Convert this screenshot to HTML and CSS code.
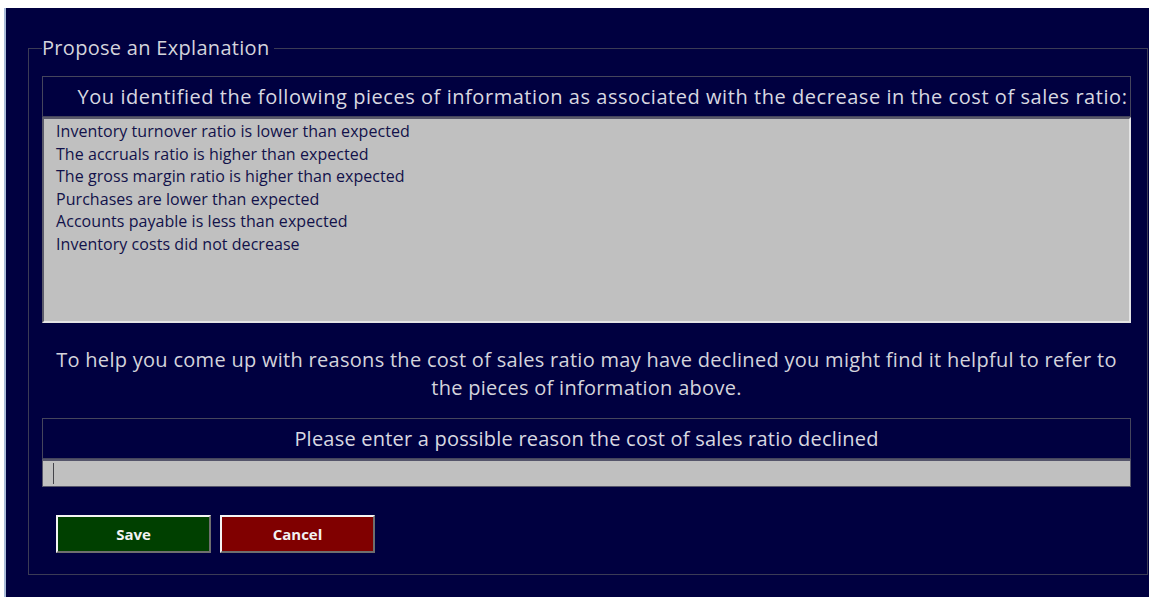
FILE: index.html
```html
<!DOCTYPE html>
<html lang="en">
<head>
<meta charset="utf-8">
<title>Propose an Explanation</title>
<link rel="stylesheet" href="styles.css">
</head>
<body>
<div class="window">
  <fieldset class="panel">
    <legend class="panel-title">Propose an Explanation</legend>
    <div class="section-head section-head-wide">You identified the following pieces of information as associated with the decrease in the cost of sales ratio:</div>
    <ul class="evidence-list">
      <li>Inventory turnover ratio is lower than expected</li>
      <li>The accruals ratio is higher than expected</li>
      <li>The gross margin ratio is higher than expected</li>
      <li>Purchases are lower than expected</li>
      <li>Accounts payable is less than expected</li>
      <li>Inventory costs did not decrease</li>
    </ul>
    <p class="hint">To help you come up with reasons the cost of sales ratio may have declined you might find it helpful to refer to the pieces of information above.</p>
    <div class="section-head">Please enter a possible reason the cost of sales ratio declined</div>
    <div class="reason-input"><span class="caret"></span></div>
    <div class="actions">
      <button class="btn btn-save" type="button">Save</button>
      <button class="btn btn-cancel" type="button">Cancel</button>
    </div>
  </fieldset>
</div>
</body>
</html>
```

FILE: styles.css
```css
html, body {
  margin: 0;
  padding: 0;
  background: #ffffff;
  height: 100%;
}

body {
  font-family: "Open Sans", Lato, sans-serif;
}

.window {
  box-sizing: border-box;
  height: calc(100% - 8px);
  margin: 8px 0 0 4px;
  border-left: 2px solid #a9bcd8;
  background: #000040;
  padding: 28px 1px 0 22px;
}

.panel {
  margin: 0;
  padding: 16px 16px 21px 13px;
  border: 1px solid #3b3b55;
  min-width: 0;
}

.panel-title {
  margin-left: 0;
  padding: 0 5px 0 0;
  color: #d4d4dc;
  font-size: 20px;
  line-height: 24px;
  letter-spacing: 0.3px;
}

.section-head {
  border: 1px solid #45455c;
  color: #d8d8e0;
  font-size: 20px;
  line-height: 39px;
  text-align: center;
  white-space: nowrap;
  letter-spacing: 0.21px;
}

.section-head-wide {
  padding-left: 32px;
  letter-spacing: 0.55px;
}

.evidence-list {
  list-style: none;
  margin: 0;
  padding: 1px 12px 0;
  box-sizing: border-box;
  height: 206px;
  background: #c0c0c0;
  border-style: solid;
  border-width: 2px;
  border-color: #5a5a6a #e4e4e4 #e4e4e4 #5a5a6a;
  color: #12124a;
  font-size: 16px;
  line-height: 22.5px;
  letter-spacing: 0.05px;
}

.hint {
  margin: 23px 0 16px;
  color: #d4d4dc;
  font-size: 20px;
  line-height: 28px;
  text-align: center;
  letter-spacing: 0.29px;
}

.reason-input {
  box-sizing: border-box;
  height: 28px;
  background: #c0c0c0;
  border: 1px solid #55556a;
  border-top-width: 2px;
  padding: 2px 0 0 10px;
}

.caret {
  display: block;
  width: 1px;
  height: 21px;
  background: #44444a;
}

.actions {
  display: flex;
  gap: 9px;
  margin: 28px 0 0 14px;
}

.btn {
  width: 155px;
  height: 38px;
  padding: 0;
  font-family: "Open Sans", Lato, sans-serif;
  font-weight: bold;
  font-size: 15px;
  color: #f2f2f2;
  border-style: solid;
  border-width: 2px;
  border-color: #f4f4f4 #6e6e6e #6e6e6e #f4f4f4;
}

.btn-save {
  background: #004000;
}

.btn-cancel {
  background: #800000;
}
```
